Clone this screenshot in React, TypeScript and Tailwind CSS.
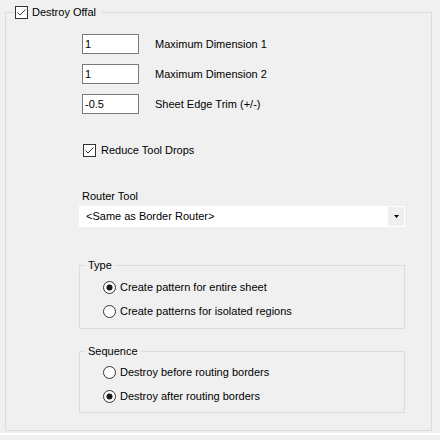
import React from 'react'

const font = { fontFamily: '"Liberation Sans", Arial, sans-serif' }

function CheckBox({ checked }: { checked: boolean }) {
  return (
    <svg width="13" height="13" viewBox="0 0 13 13" className="shrink-0">
      <rect x="0.5" y="0.5" width="12" height="12" fill="#fff" stroke="#333" />
      {checked && <polyline points="2.5,6.5 5,9 10.5,3.5" fill="none" stroke="#333" strokeWidth="1" />}
    </svg>
  )
}

function Radio({ checked }: { checked: boolean }) {
  return (
    <svg width="13" height="13" viewBox="0 0 13 13" className="shrink-0">
      <circle cx="6.5" cy="6.5" r="6" fill="#fff" stroke="#333" />
      {checked && <circle cx="6.5" cy="6.5" r="3" fill="#1a1a1a" />}
    </svg>
  )
}

function NumRow({ value, label, first }: { value: string; label: string; first?: boolean }) {
  return (
    <div className={first ? 'flex items-center h-[20px]' : 'flex items-center h-[20px] mt-[10px]'}>
      <div className="w-[57px] h-[20px] border border-[#7a7a7a] bg-white pl-[2px] flex items-center text-black">
        {value}
      </div>
      <span className="ml-[16px]">{label}</span>
    </div>
  )
}

function RadioRow({ checked, label, first }: { checked: boolean; label: string; first?: boolean }) {
  return (
    <div className={first ? 'flex items-center h-[15px] gap-[4px]' : 'flex items-center h-[15px] gap-[4px] mt-[9px]'}>
      <Radio checked={checked} />
      <span>{label}</span>
    </div>
  )
}

export default function App() {
  return (
    <div className="w-[440px] h-[440px] bg-[#f0f0f0] text-[11px] leading-[15px] text-black overflow-hidden" style={font}>
      <div className="pt-[5px] pl-[5px]">
        <fieldset className="w-[427px] border border-[#dcdcdc]">
          <legend className="ml-[8px] pl-[1px] pr-[6px] h-[15px] flex items-center gap-[4px]">
            <CheckBox checked />
            <span>Destroy Offal</span>
          </legend>

          <div className="pl-[76px] pt-[14px] pb-[17px] flex flex-col">
            <NumRow value="1" label="Maximum Dimension 1" first />
            <NumRow value="1" label="Maximum Dimension 2" />
            <NumRow value="-0.5" label="Sheet Edge Trim (+/-)" />

            <div className="flex items-center h-[15px] mt-[29px] ml-[1px] gap-[5px]">
              <CheckBox checked />
              <span>Reduce Tool Drops</span>
            </div>

            <div className="mt-[31px] h-[15px]">Router Tool</div>

            {/* Combo box */}
            <div className="mt-[2px] ml-[-3px] w-[326px] h-[21px] bg-white flex items-center">
              <span className="flex-1 pl-[7px]">&lt;Same as Border Router&gt;</span>
              <div className="w-[16px] h-[19px] mr-[1px] bg-[#efefef] flex items-center justify-center">
                <svg width="5" height="3" viewBox="0 0 5 3">
                  <polygon points="0,0 5,0 2.5,3" fill="#000" />
                </svg>
              </div>
            </div>

            {/* Type */}
            <fieldset className="mt-[31px] ml-[-3px] w-[326px] border border-[#dcdcdc]">
              <legend className="ml-[5px] pl-[3px] pr-[3px] h-[15px]">Type</legend>
              <div className="pl-[23px] pt-[7px] pb-[9px] flex flex-col">
                <RadioRow checked label="Create pattern for entire sheet" first />
                <RadioRow checked={false} label="Create patterns for isolated regions" />
              </div>
            </fieldset>

            {/* Sequence */}
            <fieldset className="mt-[15px] ml-[-3px] w-[326px] border border-[#dcdcdc]">
              <legend className="ml-[5px] pl-[3px] pr-[3px] h-[15px]">Sequence</legend>
              <div className="pl-[23px] pt-[6px] pb-[8px] flex flex-col">
                <RadioRow checked={false} label="Destroy before routing borders" first />
                <RadioRow checked label="Destroy after routing borders" />
              </div>
            </fieldset>
          </div>
        </fieldset>
      </div>
      <div className="mt-[2px] h-[2px] bg-white" />
    </div>
  )
}
